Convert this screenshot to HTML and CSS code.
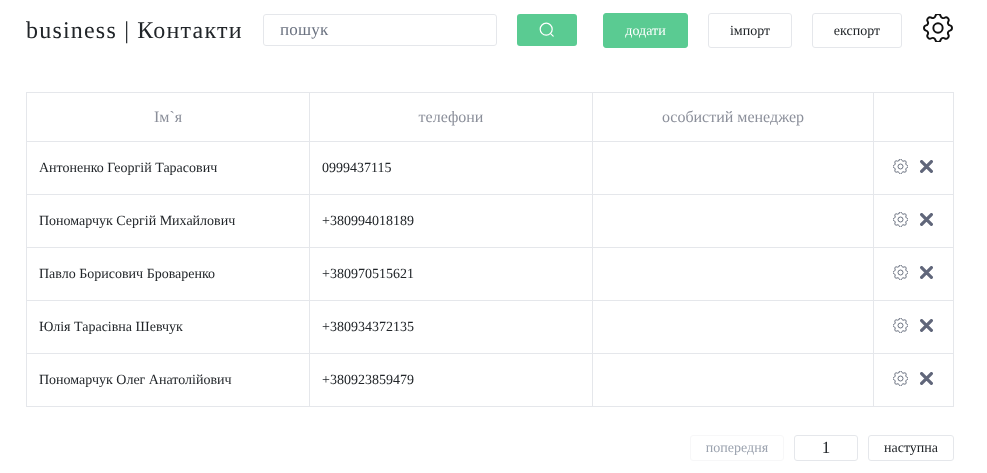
FILE: index.html
```html
<!DOCTYPE html>
<html lang="uk">
<head>
<meta charset="utf-8">
<title>business | Контакти</title>
<link rel="stylesheet" href="styles.css">
</head>
<body>
<svg class="defs" width="0" height="0" aria-hidden="true">
  <symbol id="gear" viewBox="3 3 18 18">
    <path fill="none" stroke="currentColor" stroke-linecap="round" stroke-linejoin="round" d="M10.325 4.317c.426-1.756 2.924-1.756 3.35 0a1.724 1.724 0 002.573 1.066c1.543-.94 3.31.826 2.37 2.37a1.724 1.724 0 001.065 2.572c1.756.426 1.756 2.924 0 3.35a1.724 1.724 0 00-1.066 2.573c.94 1.543-.826 3.31-2.37 2.37a1.724 1.724 0 00-2.572 1.065c-.426 1.756-2.924 1.756-3.35 0a1.724 1.724 0 00-2.573-1.066c-1.543.94-3.31-.826-2.37-2.37a1.724 1.724 0 00-1.065-2.572c-1.756-.426-1.756-2.924 0-3.35a1.724 1.724 0 001.066-2.573c-.94-1.543.826-3.31 2.37-2.37.996.608 2.296.07 2.572-1.065z"/>
    <circle cx="12" cy="12" r="3" fill="none" stroke="currentColor"/>
  </symbol>
  <symbol id="cross" viewBox="0 0 12 12">
    <path fill="none" stroke="currentColor" stroke-width="3" stroke-linecap="round" d="M1.5 1.5l9 9M10.5 1.5l-9 9"/>
  </symbol>
</svg>
<header class="topbar">
  <h1 class="title">business | Контакти</h1>
  <div class="search-box">пошук</div>
  <button class="btn-search" type="button" aria-label="пошук">
    <svg class="icon-search" viewBox="0 0 16 16"><circle cx="7.2" cy="7.2" r="6" fill="none" stroke="currentColor" stroke-width="1.2"/><path d="M11.6 11.6l2.6 2.6" fill="none" stroke="currentColor" stroke-width="1.2" stroke-linecap="round"/></svg>
  </button>
  <button class="btn btn-add" type="button">додати</button>
  <button class="btn btn-import" type="button">імпорт</button>
  <button class="btn btn-export" type="button">експорт</button>
  <svg class="icon-settings"><use href="#gear"/></svg>
</header>
<table class="contacts">
  <thead>
    <tr><th class="col-name">Ім`я</th><th class="col-phone">телефони</th><th class="col-manager">особистий менеджер</th><th class="col-actions"></th></tr>
  </thead>
  <tbody>
    <tr><td>Антоненко Георгій Тарасович</td><td>0999437115</td><td></td><td><div class="actions"><svg class="icon-gear"><use href="#gear"/></svg><svg class="icon-cross"><use href="#cross"/></svg></div></td></tr>
    <tr><td>Пономарчук Сергій Михайлович</td><td>+380994018189</td><td></td><td><div class="actions"><svg class="icon-gear"><use href="#gear"/></svg><svg class="icon-cross"><use href="#cross"/></svg></div></td></tr>
    <tr><td>Павло Борисович Броваренко</td><td>+380970515621</td><td></td><td><div class="actions"><svg class="icon-gear"><use href="#gear"/></svg><svg class="icon-cross"><use href="#cross"/></svg></div></td></tr>
    <tr><td>Юлія Тарасівна Шевчук</td><td>+380934372135</td><td></td><td><div class="actions"><svg class="icon-gear"><use href="#gear"/></svg><svg class="icon-cross"><use href="#cross"/></svg></div></td></tr>
    <tr><td>Пономарчук Олег Анатолійович</td><td>+380923859479</td><td></td><td><div class="actions"><svg class="icon-gear"><use href="#gear"/></svg><svg class="icon-cross"><use href="#cross"/></svg></div></td></tr>
  </tbody>
</table>
<nav class="pager">
  <button class="page-btn page-prev" type="button">попередня</button>
  <div class="page-num">1</div>
  <button class="page-btn page-next" type="button">наступна</button>
</nav>
</body>
</html>
```
FILE: styles.css
```css
* { box-sizing: border-box; }
html, body { margin: 0; padding: 0; }
html { background: #fff; }
body {
  width: 987px;
  height: 473px;
  overflow: hidden;
  will-change: transform;
  color: #212529;
  font-family: "Liberation Serif", "Times New Roman", serif;
  text-rendering: geometricPrecision;
  padding: 13px 33px 0 26px;
}
.defs { position: absolute; }
.topbar {
  display: flex;
  align-items: flex-start;
  height: 79px;
}
.title {
  margin: 0;
  width: 237px;
  font-size: 24px;
  line-height: 36px;
  font-weight: 400;
  letter-spacing: 1.2px;
  color: #212529;
  white-space: nowrap;
}
.search-box {
  margin-top: 1px;
  width: 234px;
  height: 32px;
  padding: 0 16px;
  border: 1px solid #e5e7eb;
  border-radius: 3px;
  font-size: 17px;
  line-height: 29px;
  letter-spacing: 0.2px;
  color: #6b7280;
}
button { font-family: inherit; text-rendering: geometricPrecision; cursor: pointer; }
.btn-search {
  margin: 1px 0 0 20px;
  width: 60px;
  height: 32px;
  padding: 0;
  border: 0;
  border-radius: 3px;
  background: #5acb92;
  color: #fff;
  display: flex;
  align-items: center;
  justify-content: center;
}
.icon-search { width: 16px; height: 16px; display: block; }
.btn {
  height: 35px;
  padding: 2px 0 0;
  border: 1px solid #e5e7eb;
  border-radius: 3px;
  background: #fff;
  color: #212529;
  font-size: 14px;
}
.btn-add { margin-left: 26px; width: 85px; background: #5acb92; border-color: #5acb92; color: #fff; }
.btn-import { margin-left: 20px; width: 84px; }
.btn-export { margin-left: 20px; width: 90px; }
.icon-settings { margin: 1px 0 0 21px; width: 30px; height: 28px; color: #111; flex: none; stroke-width: 1.25; }
.contacts {
  width: 927px;
  table-layout: fixed;
  border-collapse: collapse;
  font-size: 14px;
}
.contacts th, .contacts td { border: 1px solid #e5e7eb; }
.contacts th {
  height: 49px;
  padding: 2px 0 0;
  font-size: 16px;
  font-weight: 400;
  color: #8b8f9a;
  text-align: center;
}
.contacts td {
  height: 53px;
  padding: 2px 12px 0;
  color: #212529;
}
.col-name, .col-phone { width: 283px; }
.col-manager { width: 281px; }
.col-actions { width: 80px; }
.actions { display: flex; align-items: center; justify-content: center; gap: 12px; margin: -6px 0 0 -2px; }
.icon-gear { width: 15px; height: 15px; color: #6b7280; flex: none; stroke-width: 1.2; }
.icon-cross { width: 13px; height: 13px; color: #60667a; flex: none; }
.pager {
  display: flex;
  justify-content: flex-end;
  gap: 10px;
  width: 928px;
  margin-top: 28px;
}
.page-btn, .page-num {
  height: 26px;
  border: 1px solid #e5e7eb;
  border-radius: 3px;
  background: #fff;
  padding: 2px 0 0;
  text-align: center;
  font-size: 14px;
  color: #212529;
}
.page-prev { width: 94px; color: #9ca3af; border-color: #f7f7f8; }
.page-num { width: 64px; font-size: 17px; line-height: 20px; }
.page-next { width: 86px; }
```
